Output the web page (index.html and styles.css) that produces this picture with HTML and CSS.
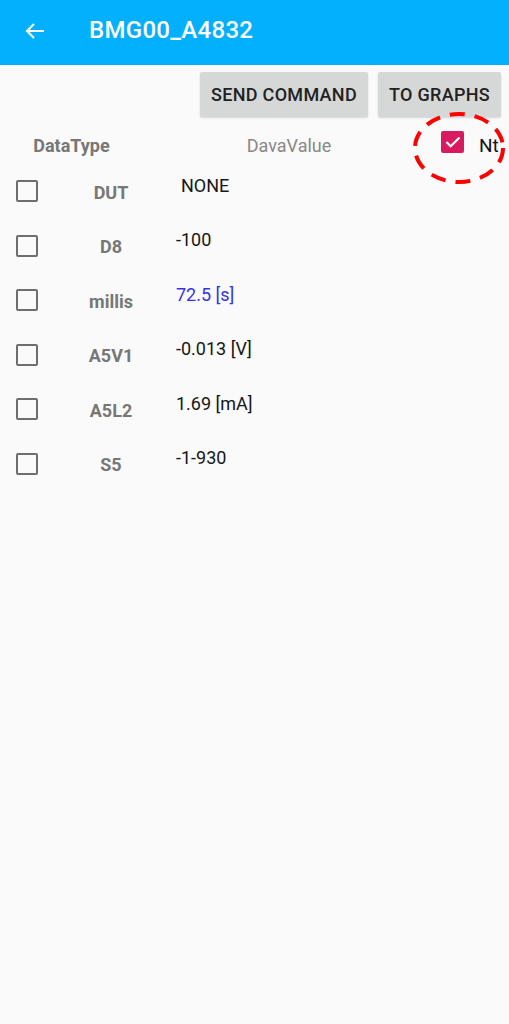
FILE: index.html
```html
<!doctype html>
<html lang="en">
  <head>
    <meta charset="UTF-8" />
    <meta name="viewport" content="width=device-width, initial-scale=1.0" />
    <title>BMG00_A4832</title>
    <link rel="stylesheet" href="styles.css">
  </head>
  <body>
    <header class="app-bar">
      <svg class="back-icon" width="20" height="16" viewBox="0 0 20 16">
        <path d="M19 8H2M9 1L2 8l7 7" fill="none" stroke="#fff" stroke-width="2.2" />
      </svg>
      <h1 class="title">BMG00_A4832</h1>
    </header>

    <div class="actions">
      <button class="btn btn-send">SEND COMMAND</button>
      <button class="btn btn-graphs">TO GRAPHS</button>
    </div>

    <!-- column headers -->
    <div class="list-head">
      <span class="head-type">DataType</span>
      <span class="head-value">DavaValue</span>
      <label class="nt">
        <span class="check checked">
          <svg width="16" height="12" viewBox="0 0 16 12">
            <path d="M1.5 6l4.2 4.2L14.5 1.5" fill="none" stroke="#fff" stroke-width="2.2" />
          </svg>
        </span>
        <span class="nt-label">Nt</span>
      </label>
      <!-- annotation ring -->
      <svg class="ring" width="100" height="78" viewBox="0 0 100 78">
        <ellipse cx="48" cy="38" rx="44" ry="34" fill="none" stroke="#f00" stroke-width="4" stroke-dasharray="15 10" />
      </svg>
    </div>

    <ul class="data-list">
      <li class="row">
        <span class="check"></span>
        <span class="name">DUT</span>
        <span class="value indent">NONE</span>
      </li>
      <li class="row">
        <span class="check"></span>
        <span class="name">D8</span>
        <span class="value">-100</span>
      </li>
      <li class="row">
        <span class="check"></span>
        <span class="name">millis</span>
        <span class="value live">72.5 [s]</span>
      </li>
      <li class="row">
        <span class="check"></span>
        <span class="name">A5V1</span>
        <span class="value">-0.013 [V]</span>
      </li>
      <li class="row">
        <span class="check"></span>
        <span class="name">A5L2</span>
        <span class="value">1.69 [mA]</span>
      </li>
      <li class="row">
        <span class="check"></span>
        <span class="name">S5</span>
        <span class="value">-1-930</span>
      </li>
    </ul>
  </body>
</html>
```

FILE: styles.css
```css
:root {
  --bar-color: #02b0fd;
  --btn-bg: #d6d7d7;
  --label-gray: #777;
  --box-gray: #6e6e6e;
  --accent: #d81b60;
  --text-color: #161616;
  --bg-color: #fafafa;
}

* {
  box-sizing: border-box;
}

body {
  margin: 0;
  font-family: Roboto, "Noto Sans", sans-serif;
  color: var(--text-color);
  background: var(--bg-color);
  min-height: 1024px;
}

/* App bar */
.app-bar {
  height: 65px;
  background: var(--bar-color);
  display: flex;
  align-items: center;
  padding-left: 25px;
}

.back-icon {
  margin-top: -3px;
}

.title {
  margin: -5px 0 0 44px;
  color: #fff;
  font-size: 24px;
  font-weight: 500;
  letter-spacing: 0.3px;
}

/* Buttons */
.actions {
  display: flex;
  justify-content: flex-end;
  gap: 10px;
  padding: 7px 8px 0 0;
}

.btn {
  height: 45px;
  padding: 0;
  border: none;
  border-radius: 2px;
  background: var(--btn-bg);
  color: #222;
  font-family: inherit;
  font-size: 18px;
  font-weight: 500;
  letter-spacing: 0.3px;
  box-shadow: 0 1px 2px rgba(0, 0, 0, 0.15);
}

.btn-send {
  width: 168px;
}

.btn-graphs {
  width: 123px;
}

/* Column headers */
.list-head {
  position: relative;
  display: flex;
  align-items: center;
  height: 47px;
  padding-top: 9px;
  font-size: 18px;
}

.head-type {
  width: 143px;
  text-align: center;
  font-weight: 700;
  color: var(--label-gray);
}

.head-value {
  flex: 1;
  text-align: center;
  color: #888;
}

.nt {
  display: flex;
  align-items: center;
  gap: 15px;
  width: 74px;
  padding-left: 6px;
}

.nt .check {
  margin-top: -6px;
}

.nt-label {
  font-size: 19px;
  color: #111;
}

.ring {
  position: absolute;
  left: 411px;
  top: -7px;
}

/* Checkboxes */
.check {
  display: inline-flex;
  align-items: center;
  justify-content: center;
  flex: none;
  width: 22px;
  height: 22px;
  border: 2.5px solid var(--box-gray);
  border-radius: 2px;
}

.check.checked {
  width: 23px;
  border: none;
  background: var(--accent);
}

/* Data rows */
.data-list {
  list-style: none;
  margin: 0;
  padding: 0;
}

.row {
  display: flex;
  align-items: center;
  height: 54.5px;
  padding-left: 16px;
  font-size: 18px;
}

.name {
  width: 138px;
  padding: 2px 0 0 8px;
  text-align: center;
  font-weight: 700;
  color: var(--label-gray);
}

.value {
  margin-top: -12px;
  color: var(--text-color);
}

.value.indent {
  padding-left: 5px;
}

.value.live {
  color: #3434e4;
}
```
